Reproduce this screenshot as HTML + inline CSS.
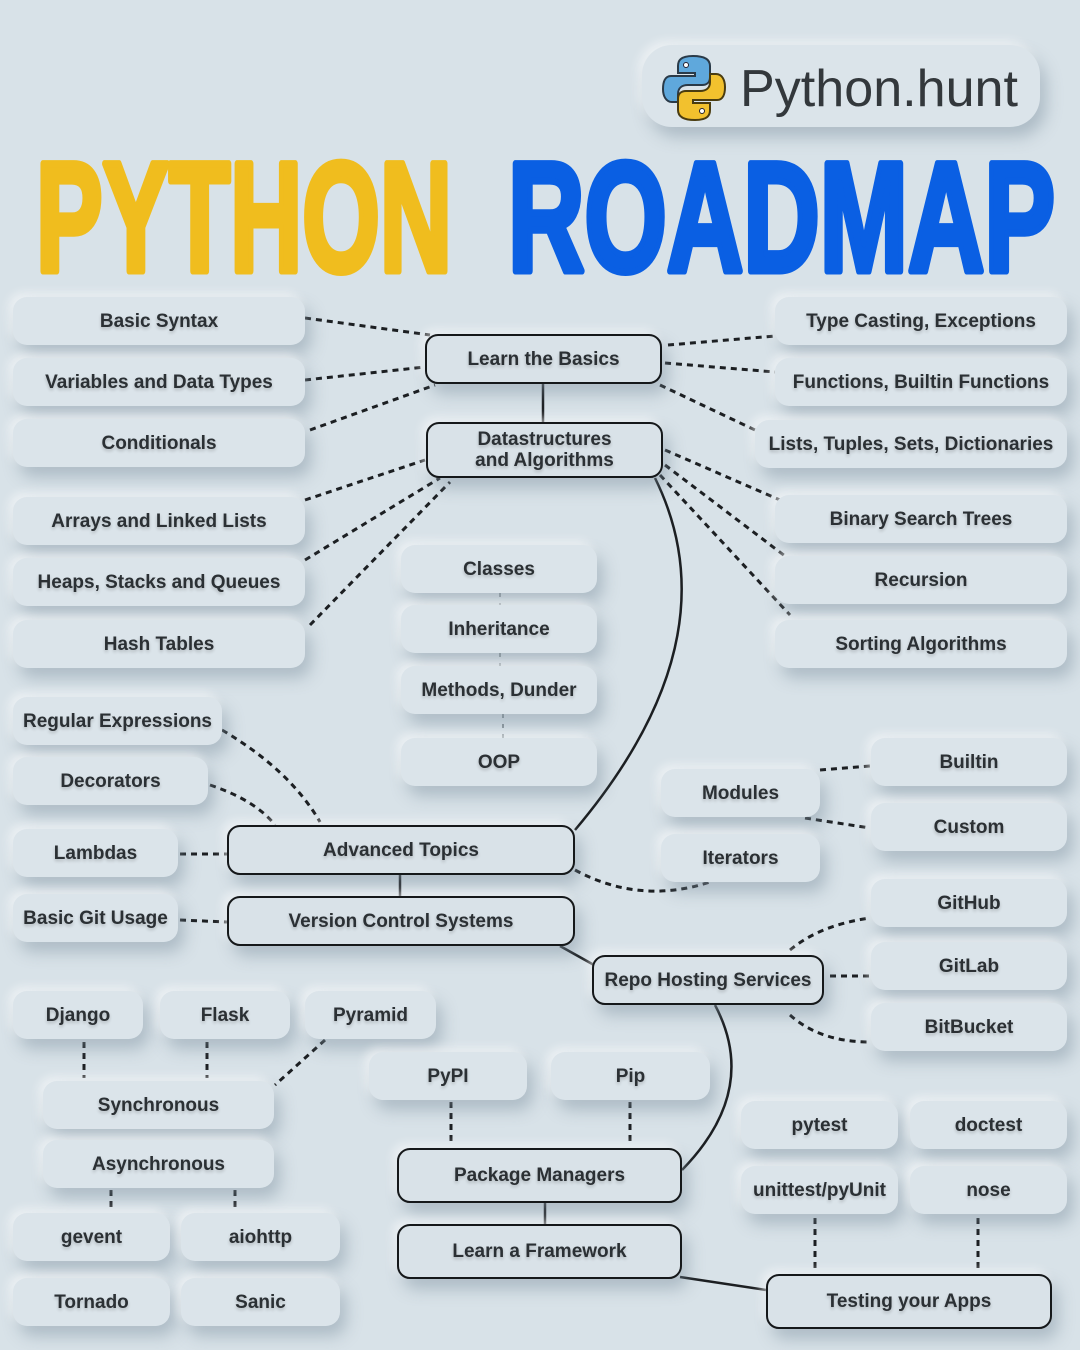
<!DOCTYPE html>
<html><head><meta charset="utf-8"><style>
*{margin:0;padding:0;box-sizing:border-box}
body{width:1080px;height:1350px;background:#d8e2e8;position:relative;overflow:hidden;font-family:"Liberation Sans",sans-serif}
.b{position:absolute;display:flex;align-items:center;justify-content:center;text-align:center;background:#dbe4ea;border-radius:14px;font-size:19px;font-weight:bold;color:#2b3034;box-shadow:6px 10px 16px rgba(120,140,155,.45),-4px -4px 10px rgba(255,255,255,.6);line-height:21px;text-shadow:0 2px 3px rgba(0,0,0,.2)}
.k{border:2px solid #15181a;border-radius:13px;background:#d9e2e8}
svg{position:absolute;left:0;top:0}
</style></head><body>
<svg width="1080" height="1350">
<g fill="none" stroke="#1c1f22" stroke-width="3" stroke-dasharray="6 5">
<path d="M305 318L430 335"/><path d="M305 380L425 367"/><path d="M310 430L435 385"/>
<path d="M305 500L425 460"/><path d="M305 560L440 478"/><path d="M310 625L450 482"/>
<path d="M668 345L775 336"/><path d="M665 363L775 372"/><path d="M660 385L755 430"/>
<path d="M665 450L780 500"/><path d="M665 465L785 556"/><path d="M660 475L790 615"/>
<path d="M222 730Q290 770 320 822"/><path d="M210 785Q255 800 275 825"/>
<path d="M180 854L227 854"/><path d="M180 920L227 922"/>
<path d="M820 770L870 766"/><path d="M805 818L870 828"/>
<path d="M575 870Q640 905 710 882"/>
<path d="M790 950Q820 925 870 918"/><path d="M830 976L870 976"/><path d="M790 1015Q820 1042 870 1042"/>
<path d="M84 1042L84 1078"/><path d="M207 1042L207 1078"/><path d="M325 1040L275 1085"/>
<path d="M111 1190L111 1212"/><path d="M235 1190L235 1212"/>
<path d="M451 1102L451 1145"/><path d="M630 1102L630 1145"/>
<path d="M815 1218L815 1270"/><path d="M978 1218L978 1272"/>
</g>
<g fill="none" stroke="#8a959c" stroke-width="2" stroke-dasharray="4 6">
<path d="M500 593L500 605M500 653L500 666M503 714L503 738"/>
</g>
<g fill="none" stroke="#1c1f22" stroke-width="2.5">
<path d="M543 384L543 422"/>
<path d="M655 478Q735 640 575 830"/>
<path d="M400 875L400 896"/>
<path d="M560 946L594 965"/>
<path d="M715 1005Q760 1090 682 1170"/>
<path d="M545 1203L545 1224"/>
<path d="M680 1277L766 1290"/>
</g>
<text x="36" y="271" font-family="Liberation Sans" font-weight="bold" font-size="156" fill="#f0bd1e" stroke="#f0bd1e" stroke-width="7" stroke-linejoin="round" textLength="416" lengthAdjust="spacingAndGlyphs">PYTHON</text>
<text x="508" y="271" font-family="Liberation Sans" font-weight="bold" font-size="156" fill="#0a5fe3" stroke="#0a5fe3" stroke-width="7" stroke-linejoin="round" textLength="547" lengthAdjust="spacingAndGlyphs">ROADMAP</text>
</svg>
<div class="b" style="left:642px;top:45px;width:398px;height:82px;border-radius:30px"></div>
<svg width="1080" height="1350" style="pointer-events:none">
<g transform="translate(662,54)">
<path d="M31 2C18 2 16 7 16 12V19H33V22H9C3 22 1 28 1 35S4 48 10 48H16V40C16 34 20 31 26 31H40C45 31 48 28 48 23V12C48 6 43 2 31 2Z" fill="#5fa8dc" stroke="#2a3a48" stroke-width="2"/>
<path d="M33 66C46 66 48 61 48 56V49H31V46H55C61 46 63 40 63 33S60 20 54 20H48V28C48 34 44 37 38 37H24C19 37 16 40 16 45V56C16 62 21 66 33 66Z" fill="#f2c12e" stroke="#4a3c10" stroke-width="2"/>
<circle cx="24" cy="11" r="2.5" fill="#fff" stroke="#223" stroke-width="1"/><circle cx="40" cy="57" r="2.5" fill="#fff" stroke="#223" stroke-width="1"/>
</g>
<text x="740" y="106" font-family="Liberation Sans" font-size="52" fill="#33383c" textLength="278" lengthAdjust="spacingAndGlyphs">Python.hunt</text>
</svg>

<div class="b" style="left:13px;top:297px;width:292px;height:48px">Basic Syntax</div>
<div class="b" style="left:13px;top:358px;width:292px;height:48px">Variables and Data Types</div>
<div class="b" style="left:13px;top:419px;width:292px;height:48px">Conditionals</div>
<div class="b" style="left:13px;top:497px;width:292px;height:48px">Arrays and Linked Lists</div>
<div class="b" style="left:13px;top:558px;width:292px;height:48px">Heaps, Stacks and Queues</div>
<div class="b" style="left:13px;top:620px;width:292px;height:48px">Hash Tables</div>
<div class="b" style="left:775px;top:297px;width:292px;height:48px">Type Casting, Exceptions</div>
<div class="b" style="left:775px;top:358px;width:292px;height:48px">Functions, Builtin Functions</div>
<div class="b" style="left:755px;top:420px;width:312px;height:48px">Lists, Tuples, Sets, Dictionaries</div>
<div class="b" style="left:775px;top:495px;width:292px;height:48px">Binary Search Trees</div>
<div class="b" style="left:775px;top:556px;width:292px;height:48px">Recursion</div>
<div class="b" style="left:775px;top:620px;width:292px;height:48px">Sorting Algorithms</div>
<div class="b" style="left:401px;top:545px;width:196px;height:48px">Classes</div>
<div class="b" style="left:401px;top:605px;width:196px;height:48px">Inheritance</div>
<div class="b" style="left:401px;top:666px;width:196px;height:48px">Methods, Dunder</div>
<div class="b" style="left:401px;top:738px;width:196px;height:48px">OOP</div>
<div class="b" style="left:13px;top:697px;width:209px;height:48px">Regular Expressions</div>
<div class="b" style="left:13px;top:757px;width:195px;height:48px">Decorators</div>
<div class="b" style="left:13px;top:829px;width:165px;height:48px">Lambdas</div>
<div class="b" style="left:13px;top:894px;width:165px;height:48px">Basic Git Usage</div>
<div class="b" style="left:661px;top:769px;width:159px;height:48px">Modules</div>
<div class="b" style="left:661px;top:834px;width:159px;height:48px">Iterators</div>
<div class="b" style="left:871px;top:738px;width:196px;height:48px">Builtin</div>
<div class="b" style="left:871px;top:803px;width:196px;height:48px">Custom</div>
<div class="b" style="left:871px;top:879px;width:196px;height:48px">GitHub</div>
<div class="b" style="left:871px;top:942px;width:196px;height:48px">GitLab</div>
<div class="b" style="left:871px;top:1003px;width:196px;height:48px">BitBucket</div>
<div class="b" style="left:13px;top:991px;width:130px;height:48px">Django</div>
<div class="b" style="left:160px;top:991px;width:130px;height:48px">Flask</div>
<div class="b" style="left:305px;top:991px;width:131px;height:48px">Pyramid</div>
<div class="b" style="left:43px;top:1081px;width:231px;height:48px">Synchronous</div>
<div class="b" style="left:43px;top:1140px;width:231px;height:48px">Asynchronous</div>
<div class="b" style="left:13px;top:1213px;width:157px;height:48px">gevent</div>
<div class="b" style="left:181px;top:1213px;width:159px;height:48px">aiohttp</div>
<div class="b" style="left:13px;top:1278px;width:157px;height:48px">Tornado</div>
<div class="b" style="left:181px;top:1278px;width:159px;height:48px">Sanic</div>
<div class="b" style="left:369px;top:1052px;width:158px;height:48px">PyPI</div>
<div class="b" style="left:551px;top:1052px;width:159px;height:48px">Pip</div>
<div class="b" style="left:741px;top:1101px;width:157px;height:48px">pytest</div>
<div class="b" style="left:910px;top:1101px;width:157px;height:48px">doctest</div>
<div class="b" style="left:741px;top:1166px;width:157px;height:48px">unittest/pyUnit</div>
<div class="b" style="left:910px;top:1166px;width:157px;height:48px">nose</div>

<div class="b k" style="left:425px;top:334px;width:237px;height:50px">Learn the Basics</div>
<div class="b k" style="left:426px;top:422px;width:237px;height:56px">Datastructures<br>and Algorithms</div>
<div class="b k" style="left:227px;top:825px;width:348px;height:50px">Advanced Topics</div>
<div class="b k" style="left:227px;top:896px;width:348px;height:50px">Version Control Systems</div>
<div class="b k" style="left:592px;top:955px;width:232px;height:50px">Repo Hosting Services</div>
<div class="b k" style="left:397px;top:1148px;width:285px;height:55px">Package Managers</div>
<div class="b k" style="left:397px;top:1224px;width:285px;height:55px">Learn a Framework</div>
<div class="b k" style="left:766px;top:1274px;width:286px;height:55px">Testing your Apps</div>
</body></html>
